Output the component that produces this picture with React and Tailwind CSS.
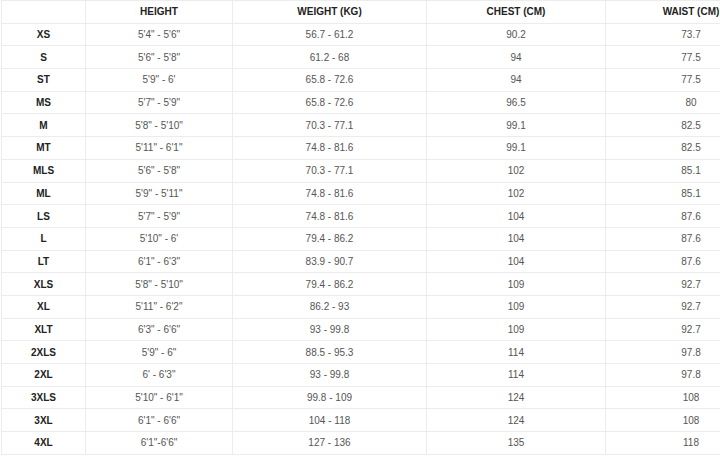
import React from 'react';

const rows = [
  ['XS', `5'4" - 5'6"`, '56.7 - 61.2', '90.2', '73.7'],
  ['S', `5'6" - 5'8"`, '61.2 - 68', '94', '77.5'],
  ['ST', `5'9" - 6'`, '65.8 - 72.6', '94', '77.5'],
  ['MS', `5'7" - 5'9"`, '65.8 - 72.6', '96.5', '80'],
  ['M', `5'8" - 5'10"`, '70.3 - 77.1', '99.1', '82.5'],
  ['MT', `5'11" - 6'1"`, '74.8 - 81.6', '99.1', '82.5'],
  ['MLS', `5'6" - 5'8"`, '70.3 - 77.1', '102', '85.1'],
  ['ML', `5'9" - 5'11"`, '74.8 - 81.6', '102', '85.1'],
  ['LS', `5'7" - 5'9"`, '74.8 - 81.6', '104', '87.6'],
  ['L', `5'10" - 6'`, '79.4 - 86.2', '104', '87.6'],
  ['LT', `6'1" - 6'3"`, '83.9 - 90.7', '104', '87.6'],
  ['XLS', `5'8" - 5'10"`, '79.4 - 86.2', '109', '92.7'],
  ['XL', `5'11" - 6'2"`, '86.2 - 93', '109', '92.7'],
  ['XLT', `6'3" - 6'6"`, '93 - 99.8', '109', '92.7'],
  ['2XLS', `5'9" - 6"`, '88.5 - 95.3', '114', '97.8'],
  ['2XL', `6' - 6'3"`, '93 - 99.8', '114', '97.8'],
  ['3XLS', `5'10" - 6'1"`, '99.8 - 109', '124', '108'],
  ['3XL', `6'1" - 6'6"`, '104 - 118', '124', '108'],
  ['4XL', `6'1"-6'6"`, '127 - 136', '135', '118'],
];

const headers = ['', 'HEIGHT', 'WEIGHT (KG)', 'CHEST (CM)', 'WAIST (CM)'];

export default function App() {
  return (
    <div className="w-[720px] h-[457px] overflow-hidden bg-white font-['Liberation_Sans',Arial,sans-serif]">
      <table className="w-[775px] ml-px table-fixed border-collapse">
        <colgroup>
          <col className="w-[84px]" />
          <col className="w-[147px]" />
          <col className="w-[194px]" />
          <col className="w-[179px]" />
          <col className="w-[171px]" />
        </colgroup>
        <thead>
          <tr className="h-[22.7px]">
            {headers.map((h, i) => (
              <th
                key={i}
                className="border border-[#ececec] p-0 text-center align-middle text-[10px] font-bold text-[#222]"
              >
                {h}
              </th>
            ))}
          </tr>
        </thead>
        <tbody>
          {rows.map((r) => (
            <tr key={r[0]} className="h-[22.7px]">
              {r.map((cell, i) => (
                <td
                  key={i}
                  className={
                    i === 0
                      ? 'border border-[#ececec] p-0 text-center align-middle text-[10px] font-bold text-[#222]'
                      : 'border border-[#ececec] p-0 text-center align-middle text-[10px] text-[#555]'
                  }
                >
                  {cell}
                </td>
              ))}
            </tr>
          ))}
        </tbody>
      </table>
    </div>
  );
}
